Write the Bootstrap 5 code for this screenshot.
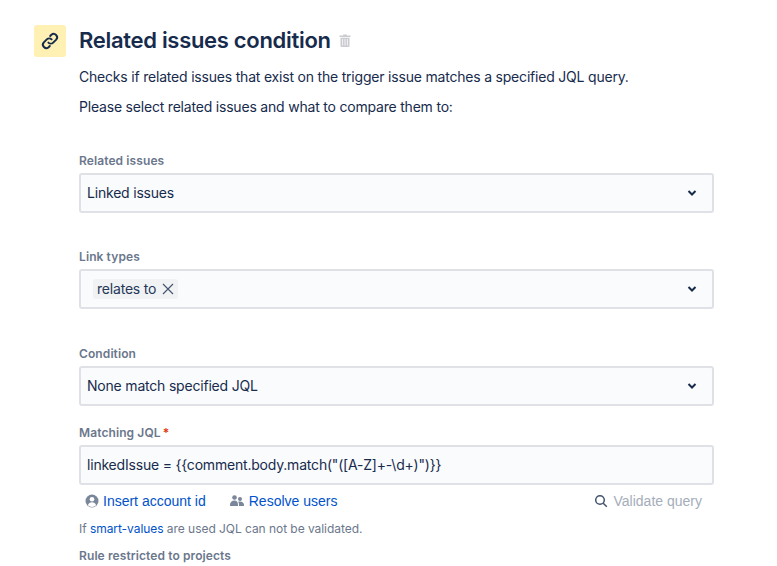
<!DOCTYPE html>
<html>
<head>
    <title>Related issues condition</title>
    <link href="https://cdn.jsdelivr.net/npm/bootstrap@5.3.3/dist/css/bootstrap.min.css" rel="stylesheet">
    <style>
        html, body { height: 100%; overflow: hidden; }
        body {
            background: #fff;
            color: #172b4d;
            font-family: Inter, "Liberation Sans", sans-serif;
            font-size: 14px;
            line-height: 20px;
            letter-spacing: -0.2px;
        }
        .page-wrap { padding: 25px 63px 0 34px; }
        .rule-icon {
            width: 32px;
            height: 32px;
            background: #fff0b3;
            border-radius: 3px;
            margin-right: 13px;
        }
        .rule-title {
            font-size: 22px;
            line-height: 30px;
            font-weight: 600;
            letter-spacing: -0.3px;
            color: #172b4d;
            margin: 0 8px 0 0;
        }
        .trash-icon { margin-top: 3px; }
        .form-area { margin-left: 45px; }
        .rule-desc { margin: 0 0 10px; }
        .intro-block { padding-top: 10px; }
        .field-label {
            display: block;
            font-size: 12px;
            line-height: 16px;
            font-weight: 600;
            letter-spacing: 0.1px;
            color: #6b778c;
            margin-bottom: 4px;
        }
        .field-box {
            height: 40px;
            background: #fafbfc;
            border: 2px solid #dfe1e6;
            border-radius: 3px;
            padding: 0 15px 0 6px;
            color: #172b4d;
        }
        .tag-chip {
            background: #f1f2f4;
            border-radius: 3px;
            height: 20px;
            padding: 0 2px 0 4px;
            margin-left: 6px;
            color: #253858;
        }
        .field-first { margin-top: 36px; }
        .field-gap-a { margin-top: 36px; }
        .field-gap-b { margin-top: 37px; }
        .jql-label-row { margin-top: 19px; }
        .req-mark { color: #de350b; margin-left: 2px; }
        .jql-actions {
            padding: 6px 12px 0 6px;
            height: 31px;
            font-family: "Liberation Sans", sans-serif;
            letter-spacing: 0;
        }
        .jql-link { color: #0052cc; text-decoration: none; }
        .link-group { column-gap: 24px; }
        .users-link { column-gap: 5px; }
        .validate-wrap { column-gap: 6px; }
        .validate-text { color: #a5adba; }
        .hint-text { font-size: 12px; line-height: 16px; letter-spacing: -0.05px; color: #6b778c; margin: 5px 0 0; }
        .hint-text a { color: #0052cc; text-decoration: none; }
        .restricted-label { margin-top: 11px; }
    </style>
</head>
<body>
    <div class="page-wrap">
        <div class="d-flex">
            <div class="rule-icon d-flex align-items-center justify-content-center flex-shrink-0">
                <svg width="20" height="20" viewBox="0 0 20 20" fill="none" stroke="#172b4d" stroke-width="2" stroke-linecap="round" stroke-linejoin="round">
                    <path d="M8.4 11.6a3.4 3.4 0 0 0 4.8 0l3-3a3.4 3.4 0 0 0-4.8-4.8l-1.2 1.2"/>
                    <path d="M11.6 8.4a3.4 3.4 0 0 0-4.8 0l-3 3a3.4 3.4 0 0 0 4.8 4.8l1.2-1.2"/>
                </svg>
            </div>
            <h1 class="rule-title">Related issues condition</h1>
            <svg class="trash-icon" width="12" height="24" viewBox="0 0 12 24" fill="#c9cbd0">
                <path d="M4.2 6.500h3.600v1h3.700v1.400H.5V7.500h3.700z"/>
                <path d="M1.500 9.700h9V18a1 1 0 0 1-1 1h-7a1 1 0 0 1-1-1z"/>
                <path d="M3.600 11v6.600M6 11v6.600M8.400 11v6.600" stroke="#fff" stroke-width=".8"/>
            </svg>
        </div>
        <div class="form-area">
            <div class="intro-block">
                <p class="rule-desc">Checks if related issues that exist on the trigger issue matches a specified JQL query.</p>
                <p class="rule-desc">Please select related issues and what to compare them to:</p>
            </div>
            <div class="field-first">
                <label class="field-label">Related issues</label>
                <div class="field-box d-flex align-items-center justify-content-between">
                    <span>Linked issues</span>
                    <svg width="10" height="8" viewBox="0 0 10 8" fill="none" stroke="#172b4d" stroke-width="2"><path d="M1.500 2 5 5.500 8.500 2"/></svg>
                </div>
            </div>
            <div class="field-gap-a">
                <label class="field-label">Link types</label>
                <div class="field-box d-flex align-items-center justify-content-between">
                    <span class="tag-chip d-inline-flex align-items-center gap-1">relates to
                        <svg width="16" height="16" viewBox="0 0 16 16" fill="none" stroke="#42526e" stroke-width="1.1"><path d="m3 3 10 10M13 3 3 13"/></svg>
                    </span>
                    <svg width="10" height="8" viewBox="0 0 10 8" fill="none" stroke="#172b4d" stroke-width="2"><path d="M1.500 2 5 5.500 8.500 2"/></svg>
                </div>
            </div>
            <div class="field-gap-b">
                <label class="field-label">Condition</label>
                <div class="field-box d-flex align-items-center justify-content-between">
                    <span>None match specified JQL</span>
                    <svg width="10" height="8" viewBox="0 0 10 8" fill="none" stroke="#172b4d" stroke-width="2"><path d="M1.500 2 5 5.500 8.500 2"/></svg>
                </div>
            </div>
            <div class="jql-label-row">
                <label class="field-label">Matching JQL<span class="req-mark">*</span></label>
                <div class="field-box d-flex align-items-center">linkedIssue = {{comment.body.match("([A-Z]+-\d+)")}}</div>
            </div>
            <div class="jql-actions d-flex align-items-start justify-content-between">
                <div class="d-flex link-group">
                    <a href="#" class="jql-link d-flex align-items-center gap-1">
                        <svg width="14" height="14" viewBox="0 0 14 14"><circle cx="7" cy="7" r="6.500" fill="#7a869a"/><circle cx="7" cy="5.300" r="2.300" fill="#fff"/><path d="M2.900 11.300c.5-2 2.200-3 4.100-3s3.600 1 4.100 3A6 6 0 0 1 7 13a6 6 0 0 1-4.100-1.700z" fill="#fff"/></svg>
                        Insert account id
                    </a>
                    <a href="#" class="jql-link users-link d-flex align-items-center">
                        <svg width="14" height="14" viewBox="0 0 14 14" fill="#7a869a"><circle cx="4.500" cy="3.500" r="2.300"/><circle cx="10" cy="5" r="2"/><path d="M0 11c0-3 2-4.500 4.500-4.500S8 8 8 11v1H0zM9 12v-1.500c0-1-.3-2-.9-2.700.5-.2 1.200-.3 1.900-.3 2.200 0 4 1.200 4 3.500V12z"/></svg>
                        Resolve users
                    </a>
                </div>
                <div class="d-flex align-items-center validate-wrap">
                    <svg width="14" height="14" viewBox="0 0 14 14" fill="none" stroke="#42526e" stroke-width="1.500"><circle cx="6" cy="6" r="4.300"/><path d="m9.200 9.200 3.600 3.600"/></svg>
                    <span class="validate-text">Validate query</span>
                </div>
            </div>
            <p class="hint-text">If <a href="#">smart-values</a> are used JQL can not be validated.</p>
            <label class="field-label restricted-label">Rule restricted to projects</label>
        </div>
    </div>
    <script src="https://cdn.jsdelivr.net/npm/bootstrap@5.3.3/dist/js/bootstrap.bundle.min.js"></script>
</body>
</html>
